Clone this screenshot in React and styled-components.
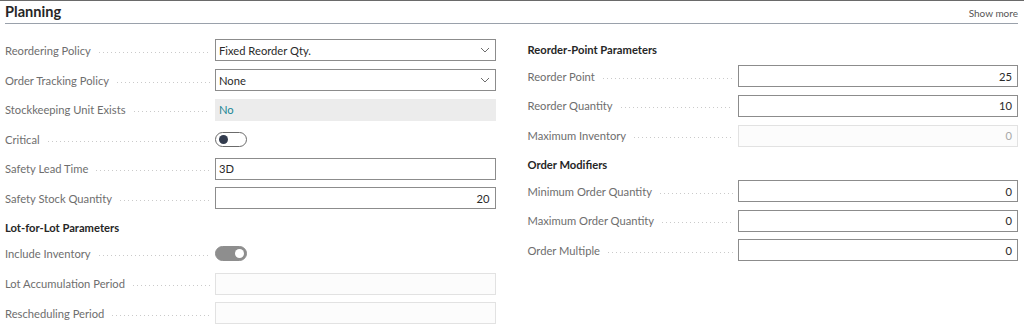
import styled, { createGlobalStyle } from "styled-components";

const GlobalStyle = createGlobalStyle`
    body {
        margin: 0;
        background: #ffffff;
        font-family: Lato, "Liberation Sans", sans-serif;
        color: #212121;
    }
`

const Page = styled.div`
    width: 1024px;
    height: 325px;
    overflow: hidden;
    border-top: 1px solid #6a6a6a;
    box-sizing: border-box;
`
const Header = styled.div`
    display: flex;
    align-items: center;
    justify-content: space-between;
    height: 22px;
    margin: 0 6px 0 5px;
    border-bottom: 1px solid #9aa1ab;
`
const Title = styled.h2`
    margin: 0;
    font-size: 14.6px;
    font-weight: 700;
    color: #262626;
    line-height: 22px;
`
const ShowMore = styled.span`
    font-size: 10px;
    color: #555;
    padding-top: 2px;
`
const Columns = styled.div`
    display: grid;
    grid-template-columns: 1fr 1fr;
    column-gap: 32px;
    margin: 11.7px 6px 0 5px;
`
const Column = styled.div`
    display: flex;
    flex-direction: column;
`
const GroupTitle = styled.div`
    height: 25.9px;
    padding-top: 4.7px;
    box-sizing: border-box;
    line-height: 20px;
    font-size: 11.2px;
    font-weight: 700;
    color: #262626;
`
const Row = styled.div`
    display: grid;
    grid-template-columns: 210px 1fr;
    align-items: center;
    height: 29.6px;
`
const Label = styled.div`
    display: flex;
    align-items: center;
    font-size: 11.2px;
    color: #6e6e6e;
    white-space: nowrap;
    padding-right: 5px;
`
const Leader = styled.span`
    flex: 1;
    height: 1px;
    margin: 4px 0 0 8px;
    background: repeating-linear-gradient(to right, #cacaca 0 1px, transparent 1px 4px);
`
const Field = styled.div`
    display: flex;
    align-items: center;
    justify-content: ${props => props.$right ? "flex-end" : "space-between"};
    height: 22px;
    box-sizing: border-box;
    padding: 0 5px 0 3px;
    border: 1px solid ${props => props.$disabled ? "#e2e2e2" : "#8c8c8c"};
    background: ${props => props.$disabled ? "#fcfcfc" : "#ffffff"};
    color: ${props => props.$disabled ? "#a8a8a8" : "#2a2a2a"};
    font-size: 11.2px;
`
const ReadOnly = styled.div`
    display: flex;
    align-items: center;
    height: 22px;
    padding-left: 4px;
    background: #ececec;
    color: #1b8796;
    font-size: 11.2px;
`
const Toggle = styled.div`
    position: relative;
    width: 32px;
    height: 15px;
    box-sizing: border-box;
    border-radius: 8px;
    border: 1px solid ${props => props.$on ? "#8e8e8e" : "#6b6b6b"};
    background: ${props => props.$on ? "#8e8e8e" : "#ffffff"};
`
const Knob = styled.span`
    position: absolute;
    top: 2px;
    left: ${props => props.$on ? "19px" : "3px"};
    width: 9px;
    height: 9px;
    border-radius: 50%;
    background: ${props => props.$on ? "#ffffff" : "#333c4e"};
`

function Chevron() {
    return (
        <svg width="10" height="6" viewBox="0 0 10 6">
            <path d="M1 1 L5 5 L9 1" fill="none" stroke="#6d6d6d" strokeWidth="1" />
        </svg>
    )
}

function Caption({ children }) {
    return (
        <Label>
            {children}
            <Leader />
        </Label>
    )
}

export default function App() {
    return (
        <Page>
            <GlobalStyle />
            <Header>
                <Title>Planning</Title>
                <ShowMore>Show more</ShowMore>
            </Header>
            <Columns>
                <Column>
                    <Row>
                        <Caption>Reordering Policy</Caption>
                        <Field>Fixed Reorder Qty.<Chevron /></Field>
                    </Row>
                    <Row>
                        <Caption>Order Tracking Policy</Caption>
                        <Field>None<Chevron /></Field>
                    </Row>
                    <Row>
                        <Caption>Stockkeeping Unit Exists</Caption>
                        <ReadOnly>No</ReadOnly>
                    </Row>
                    <Row>
                        <Caption>Critical</Caption>
                        <Toggle><Knob /></Toggle>
                    </Row>
                    <Row>
                        <Caption>Safety Lead Time</Caption>
                        <Field>3D</Field>
                    </Row>
                    <Row>
                        <Caption>Safety Stock Quantity</Caption>
                        <Field $right>20</Field>
                    </Row>
                    <GroupTitle>Lot-for-Lot Parameters</GroupTitle>
                    <Row>
                        <Caption>Include Inventory</Caption>
                        <Toggle $on><Knob $on /></Toggle>
                    </Row>
                    <Row>
                        <Caption>Lot Accumulation Period</Caption>
                        <Field $disabled />
                    </Row>
                    <Row>
                        <Caption>Rescheduling Period</Caption>
                        <Field $disabled />
                    </Row>
                </Column>
                <Column>
                    <GroupTitle>Reorder-Point Parameters</GroupTitle>
                    <Row>
                        <Caption>Reorder Point</Caption>
                        <Field $right>25</Field>
                    </Row>
                    <Row>
                        <Caption>Reorder Quantity</Caption>
                        <Field $right>10</Field>
                    </Row>
                    <Row>
                        <Caption>Maximum Inventory</Caption>
                        <Field $right $disabled>0</Field>
                    </Row>
                    <GroupTitle>Order Modifiers</GroupTitle>
                    <Row>
                        <Caption>Minimum Order Quantity</Caption>
                        <Field $right>0</Field>
                    </Row>
                    <Row>
                        <Caption>Maximum Order Quantity</Caption>
                        <Field $right>0</Field>
                    </Row>
                    <Row>
                        <Caption>Order Multiple</Caption>
                        <Field $right>0</Field>
                    </Row>
                </Column>
            </Columns>
        </Page>
    )
}
